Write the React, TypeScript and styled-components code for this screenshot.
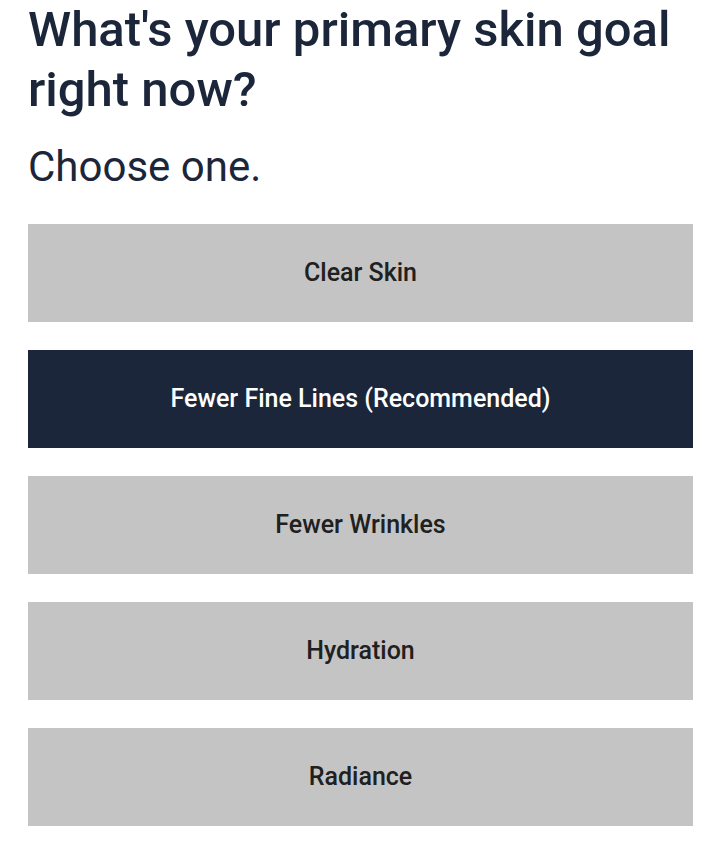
import React, { useState } from "react";
import styled, { createGlobalStyle } from "styled-components";

const GlobalStyle = createGlobalStyle`
  html, body { margin: 0; padding: 0; background: #ffffff; }
  body { font-family: Roboto, "Noto Sans", Arial, sans-serif; }
  * { box-sizing: border-box; }
`;

const Page = styled.main`
  padding: 0 27px 0 28px;
  display: flex;
  flex-direction: column;
`;

const Title = styled.h1`
  margin: 0;
  font-size: 49px;
  line-height: 60px;
  font-weight: 500;
  color: #1b263a;
`;

const Subtitle = styled.p`
  margin: 22px 0 0;
  font-size: 42px;
  line-height: 50px;
  font-weight: 400;
  color: #1b263a;
`;

const OptionList = styled.div`
  margin-top: 32px;
  display: flex;
  flex-direction: column;
  gap: 28px;
`;

const Option = styled.button<{ $selected: boolean }>`
  height: 98px;
  width: 100%;
  border: none;
  border-radius: 0;
  margin: 0;
  padding: 0 16px 2px;
  display: flex;
  align-items: center;
  justify-content: center;
  font-family: Roboto, "Noto Sans", Arial, sans-serif;
  font-size: 25px;
  font-weight: 500;
  cursor: pointer;
  background: ${(p) => (p.$selected ? "#1b263a" : "#c4c4c4")};
  color: ${(p) => (p.$selected ? "#ffffff" : "#202020")};
`;

const options = [
  "Clear Skin",
  "Fewer Fine Lines (Recommended)",
  "Fewer Wrinkles",
  "Hydration",
  "Radiance",
];

export default function App() {
  const [selected, setSelected] = useState(1);
  return (
    <>
      <GlobalStyle />
      <Page>
        <Title>What's your primary skin goal right now?</Title>
        <Subtitle>Choose one.</Subtitle>
        <OptionList>
          {options.map((o, i) => (
            <Option key={o} $selected={i === selected} onClick={() => setSelected(i)}>
              {o}
            </Option>
          ))}
        </OptionList>
      </Page>
    </>
  );
}
